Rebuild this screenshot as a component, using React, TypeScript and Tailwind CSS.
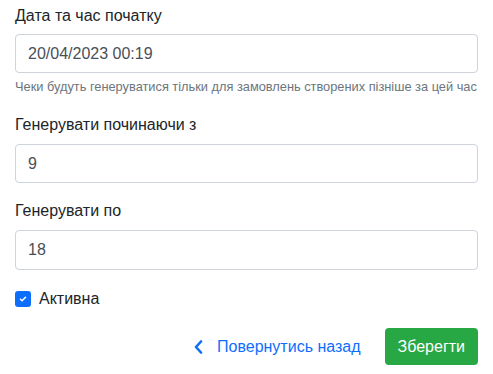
import React from "react";

export default function App() {
  const font = { fontFamily: '"Liberation Sans", Arial, sans-serif' };
  return (
    <div className="w-[493px] h-[374px] bg-white px-[15px] pt-[4px] text-[#212529]" style={font}>
      <div className="mb-[16px]">
        <label className="block text-[16px] leading-[24px] mb-[6px]">Дата та час початку</label>
        <div className="h-[39px] border border-[#ced4da] rounded-[4px] px-[12px] flex items-center text-[16px] text-[#495057]">20/04/2023 00:19</div>
        <div className="mt-[4px] text-[12.8px] leading-[20px] text-[#6c757d] whitespace-nowrap">Чеки будуть генеруватися тільки для замовлень створених пізніше за цей час</div>
      </div>
      <div className="mb-[16px]">
        <label className="block text-[16px] leading-[24px] mb-[7px]">Генерувати починаючи з</label>
        <div className="h-[39px] border border-[#ced4da] rounded-[4px] px-[12px] flex items-center text-[16px] text-[#495057]">9</div>
      </div>
      <div className="mb-[17px]">
        <label className="block text-[16px] leading-[24px] mb-[7px]">Генерувати по</label>
        <div className="h-[40px] border border-[#ced4da] rounded-[4px] px-[12px] flex items-center text-[16px] text-[#495057]">18</div>
      </div>
      <div className="flex items-center h-[24px] mb-[17px]">
        <span className="w-[16px] h-[16px] rounded-[3px] bg-[#0d6efd] flex items-center justify-center">
          <svg width="10" height="10" viewBox="0 0 20 20">
            <path d="M5 10.5l3.2 3L15 6.5" fill="none" stroke="#fff" strokeWidth="3" strokeLinecap="round" strokeLinejoin="round" />
          </svg>
        </span>
        <span className="ml-[8px] text-[16px]">Активна</span>
      </div>
      <div className="flex items-center justify-end">
        <a className="flex items-center text-[#0d6efd] text-[16px] mr-[24px]">
          <svg width="9" height="14" viewBox="0 0 9 14" className="mr-[14px]">
            <path d="M7 1.5L2 7l5 5.5" fill="none" stroke="#0d6efd" strokeWidth="2.6" strokeLinecap="round" strokeLinejoin="round" />
          </svg>
          Повернутись назад
        </a>
        <button className="h-[37px] px-[13px] rounded-[4px] bg-[#28a745] text-white text-[16px]">Зберегти</button>
      </div>
    </div>
  );
}
